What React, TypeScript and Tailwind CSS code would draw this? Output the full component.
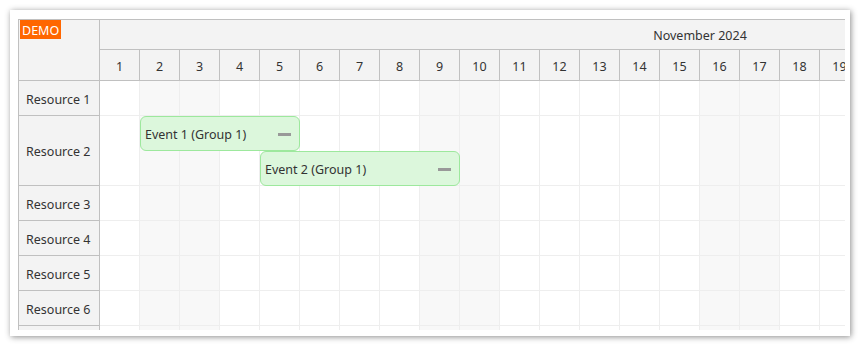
const days = Array.from({ length: 30 }, (_, i) => i + 1);
const weekend = new Set([2, 3, 9, 10, 16, 17, 23, 24, 30]);

const rows = [
  { name: "Resource 1", h: "h-[35px]" },
  { name: "Resource 2", h: "h-[70px]" },
  { name: "Resource 3", h: "h-[35px]" },
  { name: "Resource 4", h: "h-[35px]" },
  { name: "Resource 5", h: "h-[35px]" },
  { name: "Resource 6", h: "h-[35px]" },
  { name: "", h: "h-[35px]" },
];

function EventBox({ text, className }: { text: string; className: string }) {
  return (
    <div
      className={`absolute h-[35px] rounded-[6px] border border-[#9de89d] bg-[#dcf7dc] flex items-center pt-[4px] pl-[4px] text-[12.5px] text-[#333] ${className}`}
    >
      <span>{text}</span>
      <span className="absolute right-[8px] top-[16px] w-[13px] h-[3px] bg-[#999]" />
    </div>
  );
}

export default function App() {
  return (
    <div
      className="w-[860px] h-[346px] bg-white overflow-hidden pt-[10px] pl-[10px]"
      style={{ fontFamily: '"Noto Sans", "Open Sans", sans-serif' }}
    >
      <div className="w-[840px] h-[326px] bg-white shadow-[1px_1px_6px_rgba(0,0,0,0.45)] pt-[9px] pl-[8px]">
        <div className="w-[827px] h-[311px] border-t border-l border-[#c0c0c0] flex overflow-hidden text-[#333]">
          {/* row headers */}
          <div className="w-[81px] shrink-0 border-r border-[#c0c0c0] bg-[#f3f3f3]">
            <div className="h-[61px] border-b border-[#c0c0c0] pl-[1px] flex items-start">
              <div className="h-[19px] bg-[#ff6600] text-white text-[12.5px] leading-[19px] pt-[1px] px-[2px]">
                DEMO
              </div>
            </div>
            {rows.map((r, i) => (
              <div
                key={i}
                className={`${r.h} border-b border-[#c0c0c0] flex items-center pt-[4px] pl-[7px] text-[12.5px]`}
              >
                {r.name}
              </div>
            ))}
          </div>

          {/* timeline */}
          <div className="flex-1 overflow-hidden">
            <div className="w-[1200px] relative">
              <div className="h-[30px] bg-[#f3f3f3] border-b border-[#c0c0c0] flex items-center justify-center pt-[4px] text-[12.5px]">
                November 2024
              </div>
              <div className="h-[31px] bg-[#f3f3f3] border-b border-[#c0c0c0] flex">
                {days.map((d) => (
                  <div
                    key={d}
                    className="w-[40px] shrink-0 border-r border-[#c0c0c0] flex items-center justify-center pt-[4px] text-[12.5px]"
                  >
                    {d}
                  </div>
                ))}
              </div>
              <div className="relative">
                {rows.map((r, i) => (
                  <div key={i} className={`${r.h} flex border-b border-[#eeeeee]`}>
                    {days.map((d) => (
                      <div
                        key={d}
                        className={`w-[40px] shrink-0 border-r border-[#eeeeee] ${
                          weekend.has(d) ? "bg-[#f8f8f8]" : "bg-white"
                        }`}
                      />
                    ))}
                  </div>
                ))}
                <EventBox text="Event 1 (Group 1)" className="left-[40px] top-[35px] w-[160px]" />
                <EventBox text="Event 2 (Group 1)" className="left-[160px] top-[70px] w-[200px]" />
              </div>
            </div>
          </div>
        </div>
      </div>
    </div>
  );
}
